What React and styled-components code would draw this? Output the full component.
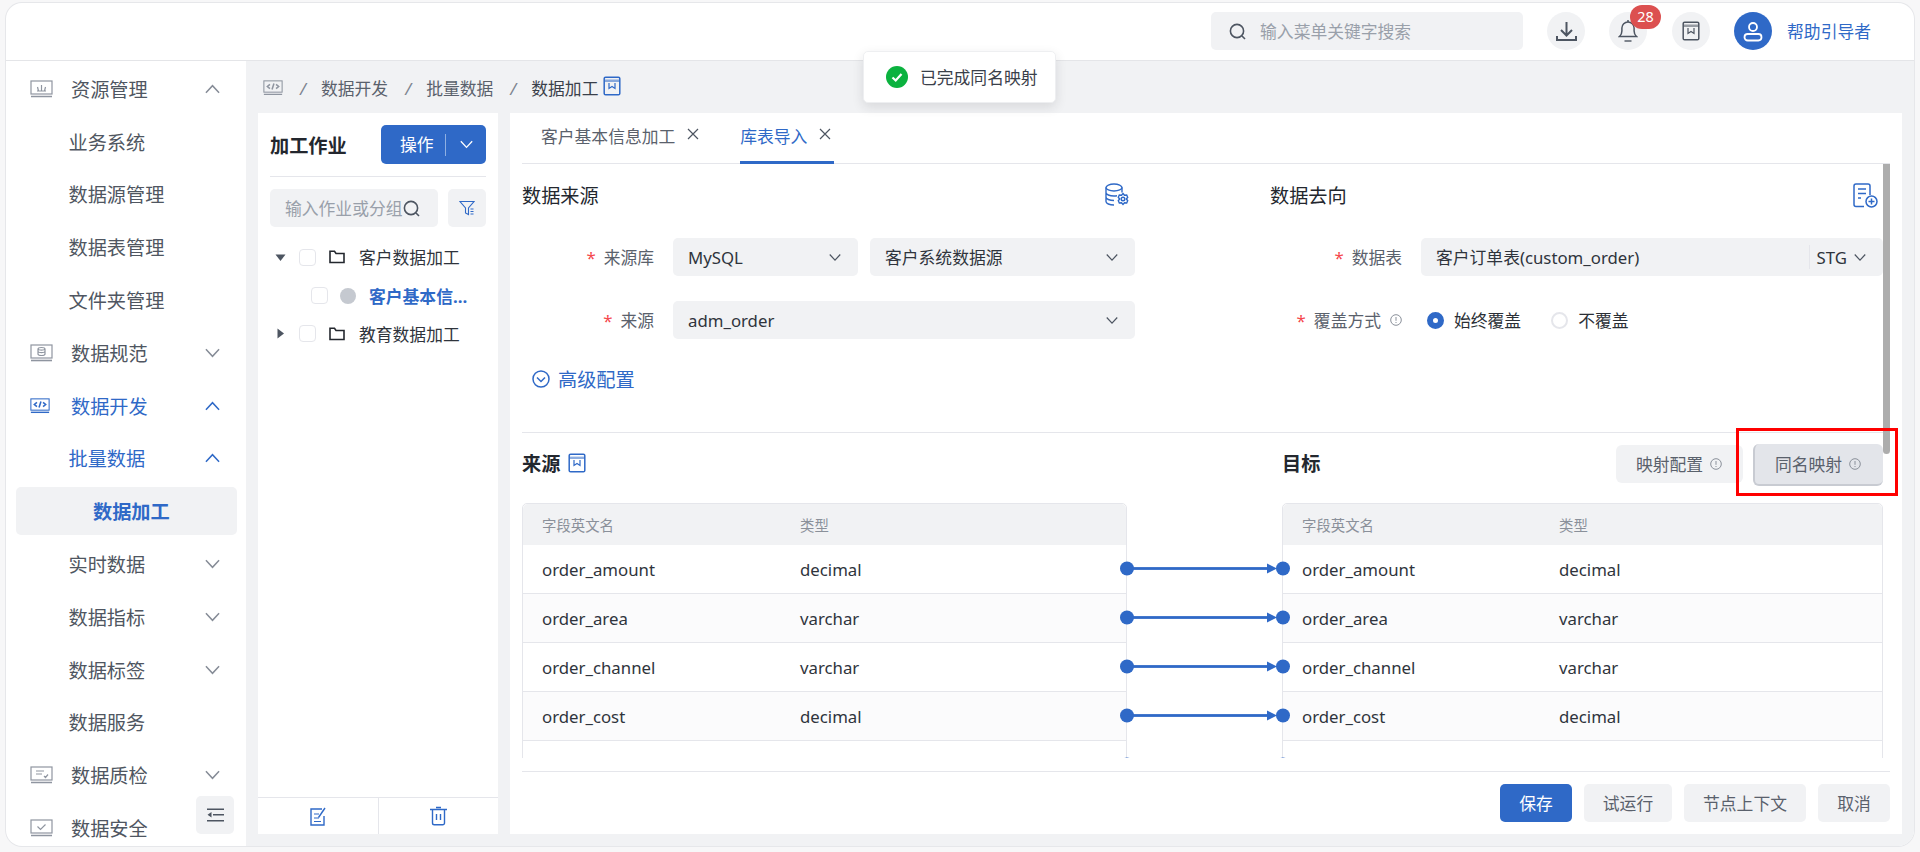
import React from 'react';
import styled, { createGlobalStyle } from 'styled-components';

const BLUE = '#2f69c7';
const GREY_BG = '#f1f2f4';
const LINE = '#e5e6eb';

const GlobalStyle = createGlobalStyle`
  html, body {
    margin: 0;
    height: 100%;
    background: #f7f7f8;
    overflow: hidden;
  }
  body {
    font-family: "Noto Sans", "Noto Sans CJK SC", sans-serif;
    font-size: 16.8px;
    color: #2b2f36;
  }
  * { box-sizing: border-box; }
`;

const Frame = styled.div`
  position: relative;
  margin: 3px 6px 0;
  width: 1908px;
  height: 843px;
  background: #fff;
  border-radius: 16px;
  overflow: hidden;
  display: flex;
  flex-direction: column;
  box-shadow: 0 0 0 1px #e6e7ea;
`;

/* top bar */
const TopBar = styled.header`
  flex: none;
  height: 58px;
  padding: 0 43px 1px 0;
  border-bottom: 1px solid #e4e5e8;
  display: flex;
  align-items: center;
  justify-content: flex-end;
  gap: 24px;
`;

const TopSearch = styled.div`
  width: 312px;
  height: 38px;
  padding: 0 18px;
  border-radius: 5px;
  background: ${GREY_BG};
  display: flex;
  align-items: center;
  gap: 14px;
  color: #99a0aa;
  svg { color: #4d5561; }
`;

const RoundButton = styled.div`
  position: relative;
  width: 38px;
  height: 38px;
  margin-right: ${p => (p.$wide ? '1px' : '0')};
  border-radius: 50%;
  background: ${p => (p.$primary ? BLUE : GREY_BG)};
  color: ${p => (p.$primary ? '#fff' : '#4d5561')};
  display: flex;
  align-items: center;
  justify-content: center;
`;

const Badge = styled.span`
  position: absolute;
  left: 21px;
  top: -7px;
  width: 31px;
  height: 24px;
  border-radius: 12px;
  background: #dc5050;
  color: #fff;
  font-size: 14.4px;
  line-height: 24px;
  text-align: center;
`;

const UserBox = styled.div`
  display: flex;
  align-items: center;
  gap: 15px;
  color: ${BLUE};
`;

/* left menu */
const Body = styled.div`
  flex: 1;
  min-height: 0;
  display: flex;
`;

const Sidebar = styled.aside`
  position: relative;
  flex: none;
  width: 240px;
  padding: 1.5px 9px 0 10px;
  overflow: hidden;
`;

const menuIndent = p => {
  if (p.$selected) return '77px';
  return p.$sub ? '52.5px' : '14px';
};

const MenuRow = styled.div`
  height: ${p => (p.$selected ? '48px' : '52.8px')};
  margin: ${p => (p.$selected ? '2.4px 0' : '0')};
  padding: 0 17px 0 ${menuIndent};
  display: flex;
  align-items: center;
  font-size: 19.2px;
  font-weight: ${p => (p.$selected ? 700 : 400)};
  color: ${p => (p.$active ? BLUE : '#4f5661')};
  background: ${p => (p.$selected ? GREY_BG : 'transparent')};
  border-radius: 5px;
`;

const MenuIcon = styled.span`
  width: 23px;
  margin-right: 18px;
  display: flex;
  color: ${p => (p.$active ? BLUE : '#8f95a0')};
`;

const MenuLabel = styled.span`
  flex: 1;
`;

const MenuChevron = styled.span`
  display: flex;
  color: ${p => (p.$active ? BLUE : '#868c97')};
`;

const CollapseButton = styled.button`
  position: absolute;
  left: 190px;
  top: 735px;
  width: 38px;
  height: 38px;
  padding: 0;
  border: 0;
  border-radius: 5px;
  background: ${GREY_BG};
  color: #4d5561;
  display: flex;
  align-items: center;
  justify-content: center;
`;

/* content */
const Content = styled.main`
  flex: 1;
  min-width: 0;
  padding: 0 12px 12px;
  background: ${GREY_BG};
  display: flex;
  flex-direction: column;
`;

const Crumbs = styled.nav`
  flex: none;
  height: 52px;
  padding: 2px 0 0 5px;
  display: flex;
  align-items: center;
  gap: 17px;
  color: #5a616c;
`;

const CrumbIcon = styled.span`
  display: flex;
  color: #8f95a0;
`;

const Slash = styled.span`
  width: 4px;
  font-style: italic;
  color: #7d848f;
`;

const CrumbCurrent = styled.span`
  display: flex;
  align-items: center;
  gap: 5px;
  color: #3a404a;
  svg { color: ${BLUE}; margin-top: -4px; }
`;

const Panels = styled.div`
  flex: 1;
  min-height: 0;
  display: flex;
  gap: 12px;
`;

/* job tree */
const TreePanel = styled.section`
  flex: none;
  width: 240px;
  background: #fff;
  display: flex;
  flex-direction: column;
`;

const TreeTop = styled.div`
  flex: 1;
  padding: 12px 12px 0;
`;

const TreeTitleRow = styled.div`
  height: 52px;
  padding-bottom: 12px;
  border-bottom: 1px solid ${LINE};
  display: flex;
  align-items: center;
  justify-content: space-between;
`;

const TreeTitle = styled.div`
  font-size: 19.2px;
  font-weight: 700;
  color: #23272e;
`;

const OpButton = styled.div`
  width: 105px;
  height: 39px;
  border-radius: 5px;
  background: ${BLUE};
  color: #fff;
  display: flex;
  align-items: center;
`;

const OpLabel = styled.span`
  width: 65px;
  padding-left: 19px;
  height: 22px;
  line-height: 22px;
  border-right: 1px solid #8fb0e2;
`;

const OpArrow = styled.span`
  flex: 1;
  display: flex;
  justify-content: center;
`;

const TreeFilters = styled.div`
  margin-top: 12px;
  display: flex;
  gap: 10px;
`;

const TreeSearch = styled.div`
  width: 168px;
  height: 38px;
  padding: 0 0 0 15px;
  border-radius: 5px;
  background: ${GREY_BG};
  color: #99a0aa;
  display: flex;
  align-items: center;
  white-space: nowrap;
  svg { color: #4d5561; flex: none; margin-left: 1px; }
`;

const FilterButton = styled.div`
  width: 38px;
  height: 38px;
  border-radius: 5px;
  background: ${GREY_BG};
  color: ${BLUE};
  display: flex;
  align-items: center;
  justify-content: center;
`;

const TreeList = styled.div`
  margin: 11px -12px 0;
`;

const TreeRow = styled.div`
  height: 38.4px;
  padding-left: ${p => (p.$child ? '53px' : '17px')};
  display: flex;
  align-items: center;
  color: #2f343c;
`;

const Caret = styled.span`
  width: 11px;
  margin-right: 13px;
  display: flex;
  justify-content: center;
  color: #4d5561;
`;

const Check = styled.span`
  flex: none;
  width: 17px;
  height: 17px;
  border: 1.5px solid ${LINE};
  border-radius: 4px;
  background: #fff;
`;

const Folder = styled.span`
  margin: 0 14px 0 13px;
  display: flex;
  color: #23272e;
`;

const StatusDot = styled.span`
  flex: none;
  width: 16px;
  height: 16px;
  margin: 0 13px 0 12px;
  border-radius: 50%;
  background: #c5c9d0;
`;

const JobName = styled.span`
  width: 100px;
  overflow: hidden;
  white-space: nowrap;
  text-overflow: ellipsis;
  font-weight: 700;
  color: ${BLUE};
`;

const TreeFoot = styled.div`
  flex: none;
  height: 37px;
  border-top: 1px solid ${LINE};
  display: flex;
  color: ${BLUE};
`;

const TreeFootCell = styled.div`
  flex: 1;
  display: flex;
  align-items: center;
  justify-content: center;
  & + & { border-left: 1px solid ${LINE}; }
`;

/* main editor */
const MainPanel = styled.section`
  position: relative;
  flex: 1;
  min-width: 0;
  padding: 0 12px;
  background: #fff;
  display: flex;
  flex-direction: column;
`;

const TabStrip = styled.div`
  flex: none;
  height: 51px;
  padding-left: 19px;
  border-bottom: 1px solid ${LINE};
  display: flex;
  gap: 38px;
`;

const Tab = styled.div`
  height: 51px;
  padding: 0 3px 3px 0;
  display: flex;
  align-items: center;
  gap: 12px;
  color: ${p => (p.$active ? BLUE : '#5a616c')};
  border-bottom: 3px solid ${p => (p.$active ? BLUE : 'transparent')};
  svg { color: #4d5561; margin-top: -3px; }
`;

const ScrollBody = styled.div`
  position: relative;
  flex: 1;
  min-height: 0;
  margin-bottom: 13px;
  padding-right: 7px;
  overflow: hidden;
`;

const ScrollThumb = styled.div`
  position: absolute;
  right: 0;
  top: 0;
  width: 7px;
  height: 290px;
  border-radius: 0 0 4px 4px;
  background: #adadad;
`;

const FormGrid = styled.div`
  display: grid;
  grid-template-columns: 613px 613px;
  justify-content: space-between;
`;

const FormColumn = styled.div`
  display: flex;
  flex-direction: column;
  gap: 24.6px;
`;

const FormHead = styled.div`
  height: 64px;
  padding-bottom: 2px;
  margin-bottom: -14.6px;
  display: flex;
  align-items: center;
  justify-content: space-between;
  font-size: 19.2px;
  color: #23272e;
  svg { color: ${BLUE}; margin-right: 5px; }
`;

const Field = styled.div`
  display: grid;
  grid-template-columns: 132px 1fr;
  column-gap: 19px;
  align-items: center;
  height: 38.4px;
`;

const FieldLabel = styled.label`
  display: flex;
  align-items: center;
  justify-content: flex-end;
  color: #5a616c;
  &::before {
    content: '*';
    margin-right: 8px;
    color: #f5494d;
  }
`;

const FieldControls = styled.div`
  display: flex;
  gap: 12px;
`;

const Select = styled.div`
  flex: ${p => (p.$width ? 'none' : 1)};
  width: ${p => (p.$width ? `${p.$width}px` : 'auto')};
  height: 38.4px;
  padding: 0 17px 0 15px;
  border-radius: 5px;
  background: ${GREY_BG};
  display: flex;
  align-items: center;
  justify-content: space-between;
  color: #2f343c;
  svg { color: #4d5561; }
`;

const SelectSuffix = styled.span`
  display: flex;
  align-items: center;
  gap: 7px;
  &::before {
    content: '';
    width: 1px;
    height: 24px;
    background: ${LINE};
  }
`;

const RadioGroup = styled.div`
  display: flex;
  align-items: center;
`;

const Radio = styled.span`
  width: 17px;
  height: 17px;
  margin: 0 10px 0 ${p => p.$gap}px;
  border-radius: 50%;
  border: ${p => (p.$on ? `6px solid ${BLUE}` : `2px solid ${LINE}`)};
  background: #fff;
`;

const InfoMark = styled.span`
  display: flex;
  margin-left: ${p => p.$gap || 7}px;
  color: #8a909a;
`;

const AdvancedLink = styled.div`
  height: 24px;
  margin: 28px 0 41px 10px;
  display: flex;
  align-items: center;
  gap: 8px;
  font-size: 19.2px;
  color: ${BLUE};
`;

const MapSection = styled.div`
  border-top: 1px solid ${LINE};
  margin-right: -7px;
  padding: 12px 7px 0 0;
  display: grid;
  grid-template-columns: 605px 155px 1fr;
  row-gap: 18px;
`;

const MapHeadLeft = styled.div`
  grid-column: 1 / 3;
  height: 40px;
  padding-bottom: 4px;
  display: flex;
  align-items: center;
  gap: 8px;
  font-size: 19.2px;
  font-weight: 700;
  color: #23272e;
  svg { color: ${BLUE}; }
`;

const MapHeadRight = styled.div`
  height: 40px;
  padding-bottom: 4px;
  display: flex;
  align-items: center;
  justify-content: space-between;
  font-size: 19.2px;
  font-weight: 700;
  color: #23272e;
`;

const MapActions = styled.div`
  align-self: flex-start;
  display: flex;
  align-items: flex-start;
  gap: 10px;
  font-size: 16.8px;
  font-weight: 400;
`;

const MapButton = styled.div`
  width: ${p => p.$width}px;
  height: ${p => (p.$pressed ? '42px' : '38px')};
  margin-top: ${p => (p.$pressed ? '-1px' : '0')};
  padding-left: 20px;
  border-radius: 6px;
  background: ${p => (p.$pressed ? '#e3e5ea' : GREY_BG)};
  border-left: ${p => (p.$pressed ? '2px solid #c8cbd2' : '0')};
  border-bottom: ${p => (p.$pressed ? '2px solid #c8cbd2' : '0')};
  display: flex;
  align-items: center;
  color: #5a616c;
`;

const FieldTable = styled.div`
  border: 1px solid ${LINE};
  border-radius: 5px 5px 0 0;
`;

const TableHead = styled.div`
  height: 41px;
  padding-left: 19px;
  display: grid;
  grid-template-columns: ${p => p.$col}px 1fr;
  align-items: center;
  background: ${GREY_BG};
  font-size: 14.4px;
  color: #8a909a;
  border-radius: 5px 5px 0 0;
`;

const TableRow = styled.div`
  height: 49px;
  padding-left: 19px;
  display: grid;
  grid-template-columns: ${p => p.$col}px 1fr;
  align-items: center;
  border-bottom: 1px solid ${LINE};
  background: ${p => (p.$odd ? '#fbfbfc' : '#fff')};
  color: #2f343c;
  padding-top: 1px;
`;

const Connectors = styled.div`
  position: relative;
  svg {
    position: absolute;
    left: 0;
    top: 0;
    overflow: visible;
  }
`;

const HighlightBox = styled.div`
  position: absolute;
  left: 1226px;
  top: 315px;
  width: 162px;
  height: 68px;
  border: 3.5px solid #f00;
  pointer-events: none;
`;

const FootBar = styled.div`
  flex: none;
  height: 63px;
  padding-top: 12px;
  border-top: 1px solid ${LINE};
  display: flex;
  justify-content: flex-end;
  gap: 12px;
`;

const FootButton = styled.div`
  width: ${p => p.$width}px;
  height: 38px;
  border-radius: 5px;
  background: ${p => (p.$primary ? BLUE : GREY_BG)};
  color: ${p => (p.$primary ? '#fff' : '#5a616c')};
  display: flex;
  align-items: center;
  justify-content: center;
`;

const Toast = styled.div`
  position: absolute;
  left: 857px;
  top: 48px;
  width: 193px;
  height: 52px;
  padding-left: 22px;
  border-radius: 5px;
  background: #fff;
  border: 1px solid #eeeff1;
  box-shadow: 0 4px 12px rgba(30, 35, 45, 0.12);
  display: flex;
  align-items: center;
  gap: 12px;
  color: #3a404a;
`;

/* drawings */
const Chevron = ({ up, w = 15, h = 8, sw = 1.6 }) => (
  <svg width={w} height={h + 2} viewBox="0 0 16 10" fill="none" stroke="currentColor" strokeWidth={sw} style={{ transform: up ? 'rotate(180deg)' : 'none' }}>
    <path d="M1 1l7 7.5L15 1" />
  </svg>
);

const CloseIcon = () => (
  <svg width="12" height="12" viewBox="0 0 12 12" fill="none" stroke="currentColor" strokeWidth="1.2">
    <path d="M1 1l10 10M11 1L1 11" />
  </svg>
);

const SearchIcon = () => (
  <svg width="17" height="17" viewBox="0 0 17 17" fill="none" stroke="currentColor" strokeWidth="1.6">
    <circle cx="8" cy="8" r="6.6" />
    <path d="M13 13l3 3" />
  </svg>
);

const InfoIcon = () => (
  <svg width="12" height="12" viewBox="0 0 12 12" fill="none" stroke="currentColor" strokeWidth="1">
    <circle cx="6" cy="6" r="5.3" />
    <path d="M6 3v3.8M6 8v1" />
  </svg>
);

const ScreenIcon = ({ kind, w = 23 }) => (
  <svg width={w} height={w * 18 / 23} viewBox="0 0 23 18" fill="none" stroke="currentColor" strokeWidth="1.2">
    <rect x="1" y="1" width="21" height="13" />
    <path d="M1 16.5h21" strokeWidth="1.6" />
    {kind === 'res' && <path d="M7 11h9M11.5 11V5M8.5 11L7.5 7M14.5 11l1-4" />}
    {kind === 'db' && <path d="M8 5c0-2 7-2 7 0v5c0 2-7 2-7 0zM8 7.5c1 1.5 6 1.5 7 0M8 5c1 1.5 6 1.5 7 0" />}
    {kind === 'code' && <path d="M8 5L5 7.5 8 10M15 5l3 2.5L15 10M12.6 4l-2.2 7" strokeWidth="1.8" />}
    {kind === 'check' && <path d="M6 5h8M6 8h6M14 10l1.5 1.5L18 8.5" />}
    {kind === 'safe' && <path d="M7.5 7.5l3 3 5-5" />}
  </svg>
);

const BookIcon = ({ s = 19 }) => (
  <svg width={s} height={s + 2} viewBox="0 0 18 20" fill="none" stroke="currentColor" strokeWidth="1.5">
    <rect x="1.2" y="1.2" width="15.6" height="17.6" rx="1.4" />
    <path d="M1.2 4.8h15.6" strokeWidth="2.4" opacity="0.55" />
    <path d="M6 7v5.5l3-2 3 2V7" strokeWidth="1.2" />
  </svg>
);

const DownloadIcon = () => (
  <svg width="21" height="21" viewBox="0 0 21 21" fill="none" stroke="currentColor" strokeWidth="2">
    <path d="M10.5 1v13M5 9l5.5 5.5L16 9" />
    <path d="M1 15v4h19v-4" />
  </svg>
);

const BellIcon = () => (
  <svg width="20" height="24" viewBox="0 0 20 24" fill="none" stroke="currentColor" strokeWidth="1.5">
    <path d="M1.5 17.5h17c-1.6-1.4-2.4-3-2.4-5.5V9A6.1 6.1 0 0 0 3.9 9v3c0 2.5-.8 4.1-2.4 5.5z" />
    <path d="M10 1v2" />
    <path d="M6.5 22h7" strokeWidth="1.8" opacity="0.7" />
  </svg>
);

const UserIcon = () => (
  <svg width="20" height="21" viewBox="0 0 20 21" fill="none" stroke="currentColor" strokeWidth="1.8">
    <circle cx="10" cy="6" r="4" />
    <rect x="1.5" y="13" width="17" height="6.5" rx="3.2" />
  </svg>
);

const FilterIcon = () => (
  <svg width="16" height="16" viewBox="0 0 16 16" fill="none" stroke="currentColor" strokeWidth="1.1">
    <path d="M1 1.5h14L9.5 8v6.5l-3-1.5V8z" />
    <path d="M11.5 9h3M11.5 11.5h3M11.5 14h3" />
  </svg>
);

const FolderIcon = () => (
  <svg width="16" height="14" viewBox="0 0 16 14" fill="none" stroke="currentColor" strokeWidth="1.6">
    <path d="M1 2.5V12.5h14V3.5H7L5.5 1.2H1z" />
  </svg>
);

const CaretIcon = ({ right }) => (
  <svg width="11" height="11" viewBox="0 0 11 11" fill="currentColor" style={{ transform: right ? 'rotate(-90deg)' : 'none' }}>
    <path d="M.5 2.5h10L5.5 9z" />
  </svg>
);

const OutdentIcon = () => (
  <svg width="17" height="14" viewBox="0 0 17 14" fill="currentColor">
    <path d="M0 .5h17V2H0zM6 6h11v1.5H6zM0 12h17v1.5H0zM4.5 4v5.500L.5 6.800z" />
  </svg>
);

const NoteIcon = () => (
  <svg width="16" height="19" viewBox="0 0 16 19" fill="none" stroke="currentColor" strokeWidth="1.4">
    <path d="M12 2H1v16h13V9" />
    <path d="M4 7h5M4 11h5M4 14.5h7" strokeWidth="1.2" />
    <path d="M8.5 10.5L15 1" />
  </svg>
);

const TrashIcon = () => (
  <svg width="17" height="20" viewBox="0 0 17 20" fill="none" stroke="currentColor" strokeWidth="1.4">
    <path d="M0 3.5h17M6 1.5h5M2.5 3.5V17a1.8 1.8 0 0 0 1.8 1.8h8.400a1.8 1.8 0 0 0 1.8-1.8V3.5" />
    <path d="M6.5 8v6M10.5 8v6" />
  </svg>
);

const DbGearIcon = () => (
  <svg width="25" height="25" viewBox="0 0 25 25" fill="none" stroke="currentColor" strokeWidth="1.4">
    <ellipse cx="9" cy="4.5" rx="8" ry="3.5" />
    <path d="M1 4.5v14c0 2 3.5 3.5 8 3.5M17 4.5v5M1 9.5c0 2 3.5 3.5 8 3.5 1 0 2-.1 3-.3M1 14c0 2 3.5 3.5 8 3.5" />
    <path d="M18 10.500l1.500 1.800 2.200-.3 1 2.300-1.300 1.700 1.300 1.700-1 2.300-2.200-.3-1.500 1.800-1.500-1.800-2.200.3-1-2.300 1.300-1.700-1.300-1.700 1-2.300 2.200.3z" />
    <circle cx="18" cy="16" r="1.8" />
  </svg>
);

const DocPlusIcon = () => (
  <svg width="25" height="25" viewBox="0 0 25 25" fill="none" stroke="currentColor" strokeWidth="1.5">
    <path d="M11 23.5H3a2 2 0 0 1-2-2V3a2 2 0 0 1 2-2h12a2 2 0 0 1 2 2v9" />
    <path d="M5 6h8M5 10.5h8M5 15h3" />
    <circle cx="18.5" cy="18.5" r="5.5" />
    <path d="M18.5 15.5v6M15.5 18.5h6" />
  </svg>
);

const CircleDownIcon = () => (
  <svg width="18" height="18" viewBox="0 0 18 18" fill="none" stroke="currentColor" strokeWidth="1.5">
    <circle cx="9" cy="9" r="8" />
    <path d="M5 7.5l4 4 4-4" />
  </svg>
);

const SuccessIcon = () => (
  <svg width="22" height="22" viewBox="0 0 22 22">
    <circle cx="11" cy="11" r="11" fill="#0bb23f" />
    <path d="M6.5 11.5l3.2 3 5.8-6.5" fill="none" stroke="#fff" strokeWidth="2.2" />
  </svg>
);

const ArrowLinks = ({ count }) => (
  <svg width="156" height="300">
    {Array.from({ length: count }).map((_, i) => {
      const y = 65.5 + i * 49;
      return (
        <g key={i} fill={BLUE}>
          <circle cx="0" cy={y} r="7" />
          <rect x="0" y={y - 1.4} width="145" height="2.8" />
          <path d={`M140 ${y - 5}l10 5-10 5z`} />
          <circle cx="156" cy={y} r="7" />
        </g>
      );
    })}
  </svg>
);

const sideMenu = [
  { label: '资源管理', icon: 'res', chevron: 'up' },
  { label: '业务系统', sub: true },
  { label: '数据源管理', sub: true },
  { label: '数据表管理', sub: true },
  { label: '文件夹管理', sub: true },
  { label: '数据规范', icon: 'db', chevron: 'down' },
  { label: '数据开发', icon: 'code', iconWidth: 20, chevron: 'up', active: true },
  { label: '批量数据', sub: true, chevron: 'up', active: true },
  { label: '数据加工', selected: true, active: true },
  { label: '实时数据', sub: true, chevron: 'down' },
  { label: '数据指标', sub: true, chevron: 'down' },
  { label: '数据标签', sub: true, chevron: 'down' },
  { label: '数据服务', sub: true },
  { label: '数据质检', icon: 'check', chevron: 'down' },
  { label: '数据安全', icon: 'safe' },
];

const columns = [
  ['order_amount', 'decimal'],
  ['order_area', 'varchar'],
  ['order_channel', 'varchar'],
  ['order_cost', 'decimal'],
  ['order_date', 'date'],
];

function Fields({ col }) {
  return (
    <FieldTable>
      <TableHead $col={col}>
        <span>字段英文名</span>
        <span>类型</span>
      </TableHead>
      {columns.map(([name, type], i) => (
        <TableRow key={name} $col={col} $odd={i % 2 === 1}>
          <span>{name}</span>
          <span>{type}</span>
        </TableRow>
      ))}
    </FieldTable>
  );
}

export default function App() {
  return (
    <>
      <GlobalStyle />
      <Frame>
        <TopBar>
          <TopSearch>
            <SearchIcon />
            <span>输入菜单关键字搜索</span>
          </TopSearch>
          <RoundButton><DownloadIcon /></RoundButton>
          <RoundButton $wide>
            <BellIcon />
            <Badge>28</Badge>
          </RoundButton>
          <RoundButton><BookIcon s={18} /></RoundButton>
          <UserBox>
            <RoundButton $primary><UserIcon /></RoundButton>
            <span>帮助引导者</span>
          </UserBox>
        </TopBar>

        <Body>
          <Sidebar>
            {sideMenu.map(item => (
              <MenuRow key={item.label} $sub={item.sub} $active={item.active} $selected={item.selected}>
                {item.icon && (
                  <MenuIcon $active={item.active}><ScreenIcon kind={item.icon} w={item.iconWidth} /></MenuIcon>
                )}
                <MenuLabel>{item.label}</MenuLabel>
                {item.chevron && (
                  <MenuChevron $active={item.active}>
                    <Chevron up={item.chevron === 'up'} />
                  </MenuChevron>
                )}
              </MenuRow>
            ))}
            <CollapseButton><OutdentIcon /></CollapseButton>
          </Sidebar>

          <Content>
            <Crumbs>
              <CrumbIcon><ScreenIcon kind="code" w={20} /></CrumbIcon>
              <Slash>/</Slash>
              <span>数据开发</span>
              <Slash>/</Slash>
              <span>批量数据</span>
              <Slash>/</Slash>
              <CrumbCurrent>
                数据加工
                <BookIcon s={18} />
              </CrumbCurrent>
            </Crumbs>

            <Panels>
              <TreePanel>
                <TreeTop>
                  <TreeTitleRow>
                    <TreeTitle>加工作业</TreeTitle>
                    <OpButton>
                      <OpLabel>操作</OpLabel>
                      <OpArrow><Chevron w={13} h={7} /></OpArrow>
                    </OpButton>
                  </TreeTitleRow>
                  <TreeFilters>
                    <TreeSearch>
                      输入作业或分组
                      <SearchIcon />
                    </TreeSearch>
                    <FilterButton><FilterIcon /></FilterButton>
                  </TreeFilters>
                  <TreeList>
                    <TreeRow>
                      <Caret><CaretIcon /></Caret>
                      <Check />
                      <Folder><FolderIcon /></Folder>
                      客户数据加工
                    </TreeRow>
                    <TreeRow $child>
                      <Check />
                      <StatusDot />
                      <JobName>客户基本信息加工</JobName>
                    </TreeRow>
                    <TreeRow>
                      <Caret><CaretIcon right /></Caret>
                      <Check />
                      <Folder><FolderIcon /></Folder>
                      教育数据加工
                    </TreeRow>
                  </TreeList>
                </TreeTop>
                <TreeFoot>
                  <TreeFootCell><NoteIcon /></TreeFootCell>
                  <TreeFootCell><TrashIcon /></TreeFootCell>
                </TreeFoot>
              </TreePanel>

              <MainPanel>
                <TabStrip>
                  <Tab>客户基本信息加工<CloseIcon /></Tab>
                  <Tab $active>库表导入<CloseIcon /></Tab>
                </TabStrip>

                <ScrollBody>
                  <FormGrid>
                    <FormColumn>
                      <FormHead>数据来源<DbGearIcon /></FormHead>
                      <Field>
                        <FieldLabel>来源库</FieldLabel>
                        <FieldControls>
                          <Select $width={185}>MySQL<Chevron w={12} h={7} /></Select>
                          <Select>客户系统数据源<Chevron w={12} h={7} /></Select>
                        </FieldControls>
                      </Field>
                      <Field>
                        <FieldLabel>来源</FieldLabel>
                        <FieldControls>
                          <Select>adm_order<Chevron w={12} h={7} /></Select>
                        </FieldControls>
                      </Field>
                    </FormColumn>
                    <FormColumn>
                      <FormHead>数据去向<DocPlusIcon /></FormHead>
                      <Field>
                        <FieldLabel>数据表</FieldLabel>
                        <FieldControls>
                          <Select>
                            客户订单表(custom_order)
                            <SelectSuffix>STG<Chevron w={12} h={7} /></SelectSuffix>
                          </Select>
                        </FieldControls>
                      </Field>
                      <Field>
                        <FieldLabel>覆盖方式<InfoMark $gap={9}><InfoIcon /></InfoMark></FieldLabel>
                        <RadioGroup>
                          <Radio $on $gap={6} />
                          始终覆盖
                          <Radio $gap={30} />
                          不覆盖
                        </RadioGroup>
                      </Field>
                    </FormColumn>
                  </FormGrid>

                  <AdvancedLink><CircleDownIcon />高级配置</AdvancedLink>

                  <MapSection>
                    <MapHeadLeft>来源<BookIcon s={18} /></MapHeadLeft>
                    <MapHeadRight>
                      目标
                      <MapActions>
                        <MapButton $width={127}>映射配置<InfoMark><InfoIcon /></InfoMark></MapButton>
                        <MapButton $width={130} $pressed>同名映射<InfoMark><InfoIcon /></InfoMark></MapButton>
                      </MapActions>
                    </MapHeadRight>
                    <Fields col={258} />
                    <Connectors><ArrowLinks count={5} /></Connectors>
                    <Fields col={257} />
                  </MapSection>

                  <ScrollThumb />
                </ScrollBody>

                <FootBar>
                  <FootButton $primary $width={72}>保存</FootButton>
                  <FootButton $width={88}>试运行</FootButton>
                  <FootButton $width={122}>节点上下文</FootButton>
                  <FootButton $width={72}>取消</FootButton>
                </FootBar>

                <HighlightBox />
              </MainPanel>
            </Panels>
          </Content>
        </Body>

        <Toast>
          <SuccessIcon />
          已完成同名映射
        </Toast>
      </Frame>
    </>
  );
}
